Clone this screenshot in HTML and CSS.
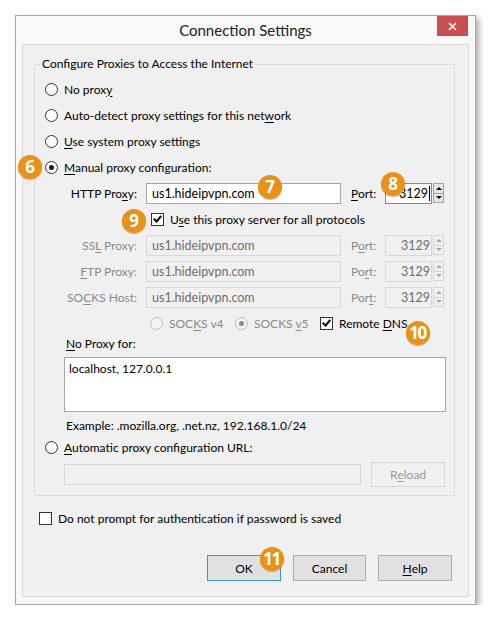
FILE: index.html
```html
<!DOCTYPE html>
<html lang="en">
<head>
  <meta charset="UTF-8" />
  <title>Connection Settings</title>
  <link rel="stylesheet" href="styles.css">
</head>
<body>

  <div class="window">
    <div class="titlebar">
      <span class="title">Connection Settings</span>
      <span class="close">
        <svg width="9" height="9" viewBox="0 0 9 9"><path d="M1 1L8 8M8 1L1 8" stroke="#fff" stroke-width="1.6"/></svg>
      </span>
    </div>

    <div class="client">
      <fieldset class="group">
        <legend>Configure Proxies to Access the Internet</legend>

        <div class="opt"><span class="radio"></span><span>No prox<u>y</u></span></div>
        <div class="opt"><span class="radio"></span><span>Auto-detect proxy settings for this net<u>w</u>ork</span></div>
        <div class="opt"><span class="radio"></span><span><u>U</u>se system proxy settings</span></div>
        <div class="opt"><span class="radio on"></span><span><u>M</u>anual proxy configuration:</span></div>

        <div class="proxy-row first">
          <span class="plabel">HTTP Pro<u>x</u>y:</span>
          <span class="field">us1.hideipvpn.com</span>
          <span class="port-label"><u>P</u>ort:</span>
          <span class="port focus">3129<span class="caret"></span></span>
          <span class="spin"><span class="up"></span><span class="down"></span></span>
        </div>

        <div class="share"><span class="check on"></span><span>U<u>s</u>e this proxy server for all protocols</span></div>

        <div class="proxy-row off">
          <span class="plabel">SS<u>L</u> Proxy:</span>
          <span class="field">us1.hideipvpn.com</span>
          <span class="port-label">P<u>o</u>rt:</span>
          <span class="port">3129</span>
          <span class="spin"><span class="up"></span><span class="down"></span></span>
        </div>
        <div class="proxy-row off">
          <span class="plabel"><u>F</u>TP Proxy:</span>
          <span class="field">us1.hideipvpn.com</span>
          <span class="port-label">Po<u>r</u>t:</span>
          <span class="port">3129</span>
          <span class="spin"><span class="up"></span><span class="down"></span></span>
        </div>
        <div class="proxy-row off">
          <span class="plabel">SO<u>C</u>KS Host:</span>
          <span class="field">us1.hideipvpn.com</span>
          <span class="port-label">Por<u>t</u>:</span>
          <span class="port">3129</span>
          <span class="spin"><span class="up"></span><span class="down"></span></span>
        </div>

        <div class="socks">
          <span class="socks-item off"><span class="radio"></span><span>SOC<u>K</u>S v4</span></span>
          <span class="socks-item off"><span class="radio on"></span><span>SOCKS <u>v</u>5</span></span>
          <span class="socks-item dns"><span class="check on"></span><span>Remote <u>D</u>NS</span></span>
        </div>

        <div class="noproxy-label"><u>N</u>o Proxy for:</div>
        <div class="textarea">localhost, 127.0.0.1</div>
        <div class="hint">Example: .mozilla.org, .net.nz, 192.168.1.0/24</div>

        <div class="opt"><span class="radio"></span><span><u>A</u>utomatic proxy configuration URL:</span></div>
        <div class="url-row">
          <span class="field url">&nbsp;</span>
          <span class="btn reload">R<u>e</u>load</span>
        </div>
      </fieldset>

      <div class="auth"><span class="check"></span><span>Do not prompt for authent<u>i</u>cation if password is saved</span></div>

      <div class="buttons">
        <span class="btn default">OK</span>
        <span class="btn">Cancel</span>
        <span class="btn"><u>H</u>elp</span>
      </div>
    </div>

    <!-- step markers -->
    <span class="badge b6">6</span>
    <span class="badge b7">7</span>
    <span class="badge b8">8</span>
    <span class="badge b9">9</span>
    <span class="badge b10">10</span>
    <span class="badge b11">11</span>
  </div>

</body>
</html>
```

FILE: styles.css
```css
body { margin: 0; background: #fff; font-family: Lato, "Noto Sans", sans-serif; font-size: 12px; color: #000; }
u { text-decoration-thickness: 1px; text-underline-offset: 2px; }

.window { position: relative; box-sizing: border-box; width: 461px; height: 590px; margin: 15px 0 0 15px; border: 1px solid #a9a9a9; background: #f8f8f8; box-shadow: 3px 3px 6px rgba(0,0,0,0.32); }
.titlebar { display: grid; grid-template-columns: 1fr auto 1fr; height: 28px; align-items: center; }
.title { grid-column: 2; font-size: 15px; color: #222; }
.close { grid-column: 3; justify-self: end; align-self: start; display: flex; align-items: center; justify-content: center; width: 31px; height: 20px; margin-right: 7px; background: #c75050; }

.client { box-sizing: border-box; height: 553px; margin: 0 6px; background: #f0f0f0; border: 1px solid #dadada; }

.group { margin: 11px 13px 0 11px; padding: 4px 6px 7px 10px; border: 1px solid #dcdcdc; }
.group legend { padding: 0 2px; margin-left: -5px; line-height: 16px; }

.opt { display: flex; align-items: center; gap: 6px; height: 26px; }

.radio { box-sizing: border-box; width: 13px; height: 13px; border: 1px solid #333; border-radius: 50%; background: #fff; display: flex; align-items: center; justify-content: center; flex: none; }
.radio.on::after { content: ""; width: 5px; height: 5px; border-radius: 50%; background: #1a1a1a; }
.check { box-sizing: border-box; width: 13px; height: 13px; border: 1px solid #333; background: #fff; flex: none; display: flex; align-items: center; justify-content: center; }
.check.on::after { content: ""; width: 3px; height: 6px; margin-top: -2px; border: solid #000; border-width: 0 2px 2px 0; transform: rotate(40deg); }

.proxy-row { display: flex; align-items: center; height: 26px; }
.plabel { width: 92px; margin-right: 9px; text-align: right; }
.field { box-sizing: border-box; width: 195px; height: 21px; padding: 0 5px; line-height: 19px; background: #fff; border: 1px solid #a5a5a5; font-size: 12.5px; }
.port-label { width: 34px; margin-left: 10px; }
.port { box-sizing: border-box; width: 47px; height: 21px; padding-right: 1px; display: flex; align-items: center; justify-content: flex-end; background: #fff; border: 1px solid #a5a5a5; font-size: 12.5px; }
.port.focus { border-color: #4d95e0; }
.caret { width: 1px; height: 15px; background: #000; margin-left: 1px; }
.spin { box-sizing: border-box; display: flex; flex-direction: column; width: 11px; height: 20px; margin-left: 1px; border: 1px solid #a2a2a2; background: #e6e6e6; }
.spin span { flex: 1; display: flex; align-items: center; justify-content: center; }
.spin .up { border-bottom: 1px solid #a2a2a2; }
.spin .up::after { content: ""; border: 3px solid transparent; border-bottom: 3px solid #000; border-top: 0; }
.spin .down::after { content: ""; border: 3px solid transparent; border-top: 3px solid #000; border-bottom: 0; }

.proxy-row.off { color: #8a8a8a; }
.proxy-row.off .field, .proxy-row.off .port { background: #f0f0f0; border-color: #d7d7d7; color: #6e6e6e; }
.proxy-row.off .spin { border-color: #d4d4d4; background: #f0f0f0; }
.proxy-row.off .spin .up { border-bottom-color: #d4d4d4; }
.proxy-row.off .spin .up::after { border-bottom-color: #a8a8a8; }
.proxy-row.off .spin .down::after { border-top-color: #a8a8a8; }

.share { display: flex; align-items: center; gap: 6px; height: 26px; margin-left: 106px; }

.socks { display: flex; align-items: center; height: 26px; margin-left: 105px; }
.socks-item { display: flex; align-items: center; gap: 6px; width: 85px; }
.socks-item.dns { width: auto; }
.socks-item.off { color: #8a8a8a; }
.socks-item.off .radio { border-color: #bdbdbd; background: #f4f4f4; }
.socks-item.off .radio.on::after { background: #8a8a8a; }

.noproxy-label { margin-left: 21px; line-height: 16px; }
.textarea { box-sizing: border-box; width: 382px; height: 55px; margin: 5px 0 0 19px; padding: 3px 4px; line-height: 16px; background: #fff; border: 1px solid #a5a5a5; }
.hint { margin: 6px 0 0 21px; line-height: 16px; }

.url-row { display: flex; align-items: center; height: 28px; margin-left: 19px; }
.field.url { width: 297px; background: #f0f0f0; border-color: #d7d7d7; }

.btn { box-sizing: border-box; display: flex; align-items: center; justify-content: center; width: 74px; height: 26px; background: #e1e1e1; border: 1px solid #adadad; }
.btn.reload { height: 25px; margin-left: 10px; background: #f0f0f0; border-color: #d6d6d6; color: #9a9a9a; }
.btn.default { border-color: #3b8fe4; }

.auth { display: flex; align-items: center; gap: 6px; height: 20px; margin: 12px 0 0 16px; }

.buttons { display: flex; justify-content: flex-end; gap: 12px; margin-top: 27px; padding-right: 16px; }
.buttons .btn:nth-child(2) { width: 73px; }

.badge { position: absolute; width: 24px; height: 24px; border-radius: 50%; background: #e9921a; box-shadow: 0 1px 1px rgba(120,60,0,0.35); color: #fff; font-family: "Open Sans", sans-serif; font-weight: 700; font-size: 17px; line-height: 24px; text-align: center; }
.b6 { left: 2px; top: 139px; }
.b7 { left: 242px; top: 159px; }
.b8 { left: 365px; top: 156px; }
.b9 { left: 106px; top: 193px; }
.b10 { left: 390px; top: 305px; letter-spacing: -1.5px; text-indent: -1px; }
.b11 { left: 244px; top: 531px; letter-spacing: -1.5px; text-indent: -1px; }
```
